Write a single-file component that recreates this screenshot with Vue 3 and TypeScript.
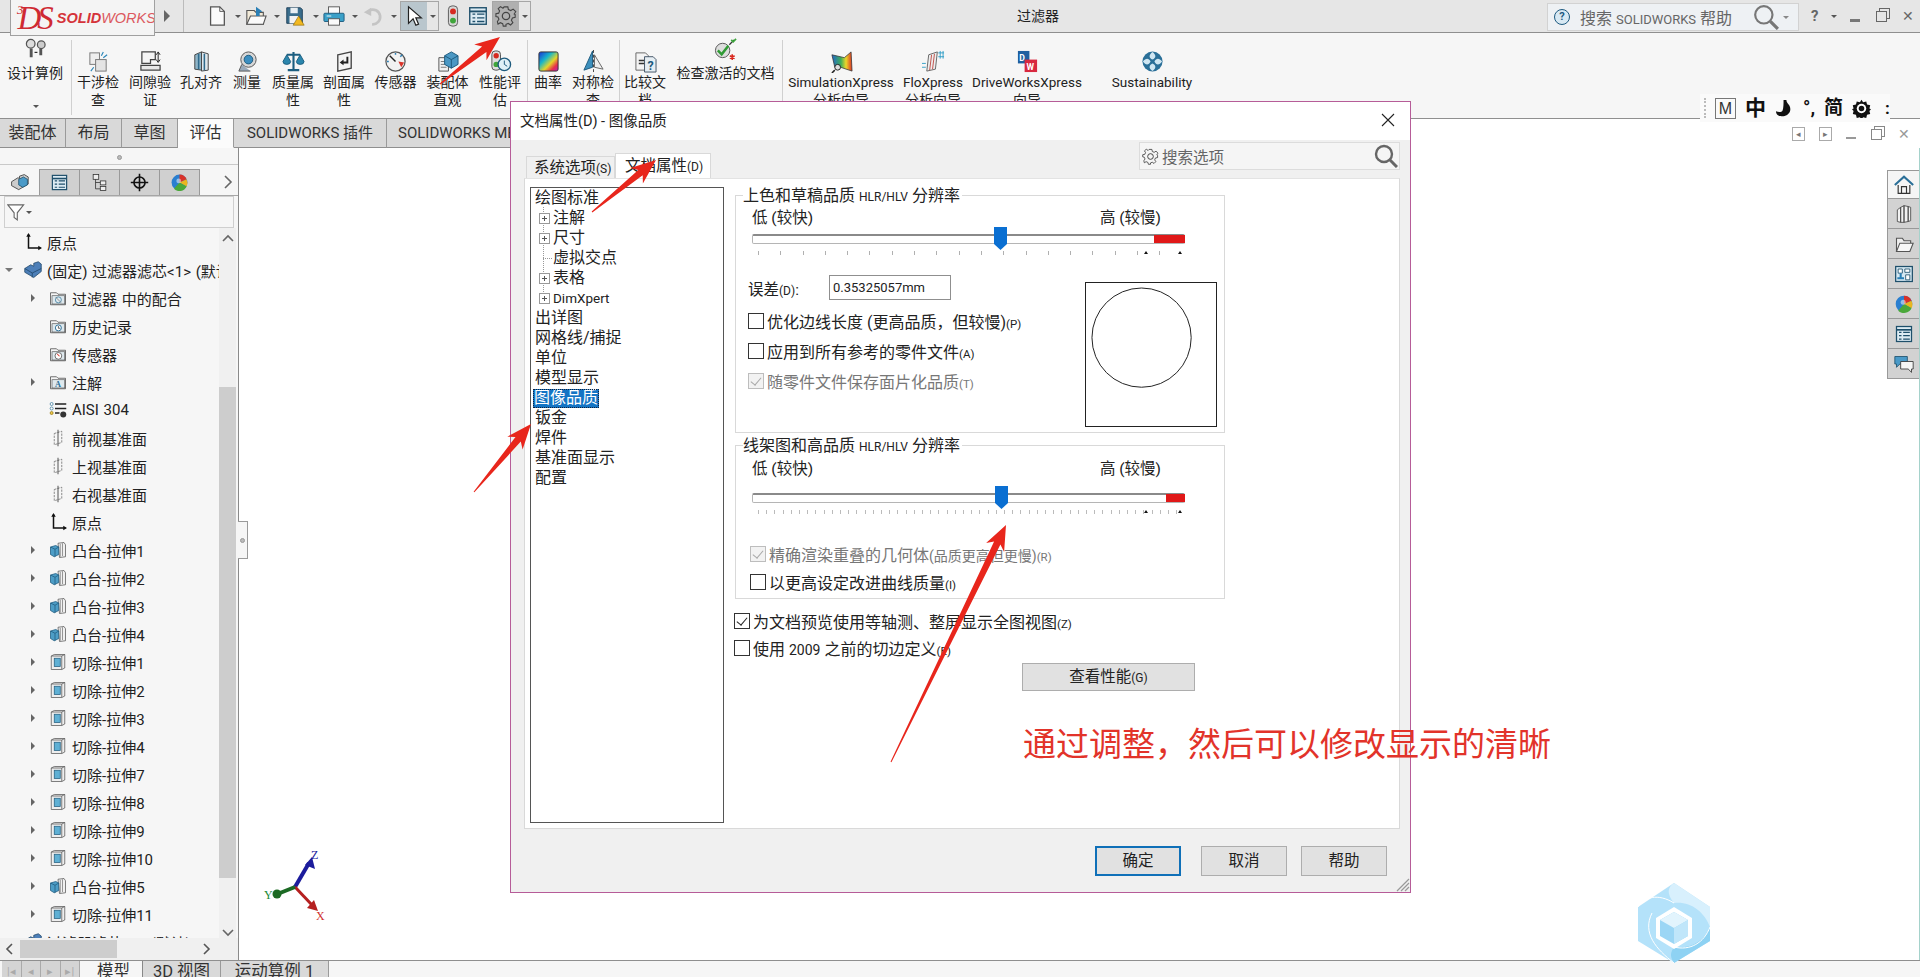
<template>
  <div class="app">
    <!-- 标题栏 -->
    <header class="titlebar">
      <div class="logo">
        <span class="logo-ds"><sup>3</sup>DS</span>
        <span class="logo-solid">SOLID</span><span class="logo-works">WORKS</span>
      </div>
      <svg class="logo-more" viewBox="0 0 8 14"><path d="M1 1l6 6-6 6z" fill="#666" /></svg>
      <div class="quick">
        <div v-for="t in quickTools" :key="t" class="tool">
          <svg viewBox="0 0 24 24" v-html="icons[t]"></svg>
          <i class="caret"></i>
        </div>
        <div class="tool-box tool-select">
          <svg viewBox="0 0 24 24" v-html="icons.cursor"></svg>
          <i class="caret"></i>
        </div>
        <svg class="tool-single" viewBox="0 0 24 24" v-html="icons.traffic"></svg>
        <svg class="tool-single" viewBox="0 0 24 24" v-html="icons.list"></svg>
        <div class="tool-box tool-gear">
          <svg viewBox="0 0 24 24" v-html="icons.gear"></svg>
          <i class="caret"></i>
        </div>
      </div>
      <div class="doc-title">过滤器</div>
      <div class="help-search">
        <span class="help-circle">?</span>
        <span class="help-text">搜索 <small>SOLIDWORKS</small> 帮助</span>
        <svg class="help-glass" viewBox="0 0 24 24"><circle cx="10" cy="10" r="8" fill="none" stroke="#777" stroke-width="2" /><path d="M16 16l7 7" stroke="#777" stroke-width="3" /></svg>
        <i class="caret"></i>
      </div>
      <div class="win-btns">
        <span class="win-q">?</span><i class="caret"></i>
        <span class="win-min"></span>
        <span class="win-restore"></span>
        <span class="win-x">✕</span>
      </div>
    </header>

    <!-- 功能区 -->
    <section class="ribbon">
      <div v-for="(g, gi) in ribbonGroups" :key="gi" class="rb-group">
        <div
          v-for="item in g"
          :key="item.lines.join('')"
          class="rb-item"
          :class="{ up: item.up }"
          :style="{ width: item.w + 'px' }"
        >
          <svg class="rb-icon" viewBox="0 0 24 24" v-html="icons[item.icon]"></svg>
          <span v-for="l in item.lines" :key="l" class="rb-line" :class="{ latin: /^[A-Za-z]/.test(l) }">{{ l }}</span>
          <i v-if="item.icon === 'study'" class="caret rb-caret"></i>
        </div>
      </div>
    </section>

    <nav class="cmd-tabs">
      <span v-for="t in cmdTabs" :key="t" class="cmd-tab" :class="{ active: t === '评估' }">{{ t }}</span>
    </nav>

    <main class="main">
      <aside class="side">
        <div class="sash"><i></i></div>
        <div class="side-tabs">
          <span v-for="(t, i) in sideTabs" :key="t" class="side-tab" :class="{ active: i === 0 }">
            <svg viewBox="0 0 24 24" v-html="icons[t]"></svg>
          </span>
          <svg class="side-more" viewBox="0 0 10 14"><path d="M2 1l6 6-6 6" fill="none" stroke="#666" stroke-width="1.6" /></svg>
        </div>
        <div class="filter">
          <svg viewBox="0 0 24 24"><path d="M1 3h20l-8 10v9l-4-3v-6z" fill="#fff" stroke="#666" stroke-width="1.4" /></svg>
          <i class="caret"></i>
        </div>
        <div class="tree-wrap">
          <div class="tree">
            <div v-for="(r, i) in treeRows" :key="i" class="t-row" :class="'lv' + r.lv">
              <i class="t-exp" :class="r.exp"></i>
              <svg class="t-icon" viewBox="0 0 24 24" v-html="icons[r.icon]"></svg>
              <span class="t-text">{{ r.text }}</span>
            </div>
          </div>
          <div class="vscroll">
            <svg viewBox="0 0 14 10"><path d="M2 8l5-5 5 5" fill="none" stroke="#666" stroke-width="1.6" /></svg>
            <div class="vtrack"><div class="vthumb"></div></div>
            <svg viewBox="0 0 14 10"><path d="M2 2l5 5 5-5" fill="none" stroke="#666" stroke-width="1.6" /></svg>
          </div>
        </div>
        <div class="hscroll">
          <svg viewBox="0 0 10 14"><path d="M8 2L3 7l5 5" fill="none" stroke="#555" stroke-width="1.6" /></svg>
          <div class="hthumb"></div>
          <svg class="hnext" viewBox="0 0 10 14"><path d="M2 2l5 5-5 5" fill="none" stroke="#555" stroke-width="1.6" /></svg>
        </div>
      </aside>

      <div class="view">
        <div class="side-handle"><i></i></div>
        <div class="view-btns">
          <span class="vb-box">◂</span><span class="vb-box">▸</span>
          <span class="win-min small"></span><span class="win-restore small"></span><span class="vb-x">✕</span>
        </div>
        <div class="task-pane">
          <span v-for="(t, i) in taskIcons" :key="t" class="task-btn" :class="{ active: i === 0 }">
            <svg viewBox="0 0 24 24" v-html="icons[t]"></svg>
          </span>
        </div>
        <svg class="triad" viewBox="0 0 70 70">
          <path d="M33 36L47 12" stroke="#1c1c9c" stroke-width="4" />
          <path d="M50 6l3 12-10-4z" fill="#1c1c9c" />
          <path d="M33 36L50 54" stroke="#b52020" stroke-width="3" />
          <path d="M56 60l-11-3 7-8z" fill="#b52020" />
          <path d="M33 36L18 42" stroke="#1b6a24" stroke-width="4" />
          <circle cx="15" cy="43" r="4.5" fill="#1b6a24" />
          <text x="49" y="8" class="tx" fill="#1c1c9c">Z</text>
          <text x="54" y="69" class="tx" fill="#d03030">X</text>
          <text x="2" y="48" class="tx" fill="#1b8a34">Y</text>
        </svg>
      </div>
    </main>

    <footer class="bottom">
      <div class="b-nav"><span v-for="n in ['|◂', '◂', '▸', '▸|']" :key="n">{{ n }}</span></div>
      <span class="b-tab active">模型</span>
      <span class="b-tab b-3d">3D 视图</span>
      <span class="b-tab b-motion">运动算例 1</span>
    </footer>

    <!-- 输入法状态条 -->
    <div class="ime">
      <i class="ime-dots"></i>
      <span class="ime-m">M</span>
      <b class="ime-zh">中</b>
      <svg viewBox="0 0 20 20"><path d="M9 1h3c0 4 5 5 4 11-1 5-7 7-10 6-3 0-5-2-5-5 3 1 6 1 7-1 1-3 1-7 1-11z" fill="#111" /></svg>
      <b class="ime-punct">°,</b>
      <b class="ime-zh small">简</b>
      <svg viewBox="0 0 24 24" v-html="icons.gearBlack"></svg>
      <b class="ime-menu">:</b>
    </div>

    <!-- 对话框 -->
    <div class="dialog">
      <div class="dlg-title">
        <span>文档属性(D) - 图像品质</span>
        <svg viewBox="0 0 14 14"><path d="M1 1l12 12M13 1L1 13" stroke="#222" stroke-width="1.1" /></svg>
      </div>
      <div class="dlg-tabs">
        <span class="dlg-tab">系统选项<small>(S)</small></span>
        <span class="dlg-tab active">文档属性<small>(D)</small></span>
        <div class="dlg-search">
          <svg class="ds-gear" viewBox="0 0 24 24" v-html="icons.gear"></svg>
          <span>搜索选项</span>
          <svg class="ds-glass" viewBox="0 0 24 24"><circle cx="10" cy="10" r="8" fill="none" stroke="#666" stroke-width="2.4" /><path d="M16 16l7 7" stroke="#666" stroke-width="3" /></svg>
        </div>
      </div>
      <div class="dlg-panel">
        <ul class="opt-tree">
          <li v-for="o in optionTree" :key="o.text" class="opt" :class="{ child: o.child, last: o.text === 'DimXpert' }">
            <i v-if="o.child" class="opt-box" :class="{ leaf: o.leaf }"></i>
            <span :class="{ selected: o.text === '图像品质', latin: o.text === 'DimXpert' }">{{ o.text }}</span>
          </li>
        </ul>

        <div class="opts">
          <div class="group g-shade">
            <div class="legend"><span>上色和草稿品质 <small>HLR/HLV</small> 分辨率</span></div>
            <div class="speed"><span>低 (较快)</span><span>高 (较慢)</span></div>
            <div class="slider">
              <div class="track"><div class="red" :style="{ width: '31px' }"></div></div>
              <svg class="thumb" viewBox="0 0 13 23"><path d="M0 0h13v17l-6.5 6L0 17z" fill="#0a6fd2" /></svg>
              <div class="ticks coarse"></div>
              <i class="mark m1"></i><i class="mark m2"></i>
            </div>
            <div class="shade-row">
              <div class="shade-left">
                <div class="dev-row">
                  <span class="dev-label">误差<small>(D)</small>:</span>
                  <span class="dev-input">0.35325057mm</span>
                </div>
                <label class="chk"><i class="box"></i><span>优化边线长度 (更高品质，但较慢)<small>(P)</small></span></label>
                <label class="chk"><i class="box"></i><span>应用到所有参考的零件文件<small>(A)</small></span></label>
                <label class="chk off"><i class="box on"></i><span>随零件文件保存面片化品质<small>(T)</small></span></label>
              </div>
              <div class="preview">
                <svg viewBox="0 0 131 144"><circle cx="56" cy="55" r="50" fill="none" stroke="#222" stroke-width="1" /></svg>
              </div>
            </div>
          </div>

          <div class="group g-wire">
            <div class="legend"><span>线架图和高品质 <small>HLR/HLV</small> 分辨率</span></div>
            <div class="speed"><span>低 (较快)</span><span>高 (较慢)</span></div>
            <div class="slider">
              <div class="track"><div class="red" :style="{ width: '19px' }"></div></div>
              <svg class="thumb t2" viewBox="0 0 13 23"><path d="M0 0h13v17l-6.5 6L0 17z" fill="#0a6fd2" /></svg>
              <div class="ticks fine"></div>
              <i class="mark m1"></i><i class="mark m2"></i>
            </div>
            <div class="wire-checks">
              <label class="chk off"><i class="box on"></i><span>精确渲染重叠的几何体<small class="mid">(品质更高但更慢)</small><small>(R)</small></span></label>
              <label class="chk"><i class="box"></i><span>以更高设定改进曲线质量<small>(I)</small></span></label>
            </div>
          </div>

          <div class="outer-checks">
            <label class="chk"><i class="box on"></i><span>为文档预览使用等轴测、整屏显示全图视图<small>(Z)</small></span></label>
            <label class="chk"><i class="box"></i><span>使用 <small class="mid">2009</small> 之前的切边定义<small>(E)</small></span></label>
          </div>
          <button class="btn perf">查看性能<small>(G)</small></button>
        </div>
      </div>
      <div class="dlg-foot">
        <button class="btn ok">确定</button>
        <button class="btn">取消</button>
        <button class="btn">帮助</button>
      </div>
      <svg class="grip" viewBox="0 0 14 14"><path d="M13 1L1 13M13 5L5 13M13 9l-4 4" stroke="#999" stroke-width="1.2" /></svg>
    </div>

    <!-- 标注 -->
    <div class="note">通过调整，然后可以修改显示的清晰</div>
    <svg class="marks" viewBox="0 0 1920 977">
      <polygon v-for="(a, i) in arrows" :key="i" :points="arrowPoints(a)" fill="#e8261c" />
    </svg>

    <!-- 水印 -->
    <svg class="wm" viewBox="0 0 72 80">
      <path d="M36 0l36 24v34L36 80 0 58V24z" fill="#b4e2fa" />
      <path d="M36 0l36 24v20C66 28 52 18 36 20 28 10 30 4 36 0z" fill="#d8f0fd" />
      <path d="M72 44v14L36 80c-4-6-4-10 0-16 18 2 30-6 36-20z" fill="#8ed2f3" />
      <path d="M0 24C6 14 20 10 36 20M72 44C66 60 52 68 36 64M36 80C18 66 4 50 14 30" fill="none" stroke="#fff" stroke-width="1" />
      <path d="M36 24l18 11v20L36 66 18 55V35z" fill="#fff" />
      <path d="M36 29l14 8v16l-14 8-14-8V37z" fill="#9bd6f5" />
      <path d="M36 29l14 8-14 8-14-8z" fill="#e2f4fd" />
      <path d="M36 45v16l14-8V37z" fill="#c0e6fa" />
    </svg>
  </div>
</template>

<script setup lang="ts">
interface RibbonItem { icon: string; lines: string[]; w: number; up?: boolean }
interface TreeRow { lv: number; exp: string; icon: string; text: string }
interface OptionNode { text: string; child?: boolean; leaf?: boolean }
type Arrow = [number, number, number, number]

const ball = '<circle cx="12" cy="12" r="10" fill="#2a7fd0"/><path d="M12 12V2a10 10 0 0 1 9 6z" fill="#d8322a"/><path d="M12 12l9-4a10 10 0 0 1 0 9z" fill="#e9b61f"/><path d="M12 12l9 5a10 10 0 0 1-16 3z" fill="#4aa83a"/><circle cx="11" cy="10" r="3" fill="#fff" opacity=".5"/>'
const listIcon = '<rect x="3" y="3" width="18" height="18" fill="#dcebf3" stroke="#1e4f6b" stroke-width="1.5"/><path d="M3 7h18" stroke="#1e4f6b" stroke-width="2"/><path d="M6 10h3M6 14h3M6 18h3M11 10h8M11 14h8M11 18h8" stroke="#1e4f6b" stroke-width="1.5"/>'
const folderBase = '<path d="M2 5h8l2 2h10v14H2z" fill="#f5f5f5" stroke="#444"/><rect x="4" y="9" width="17" height="11" fill="#dfe9ee" stroke="#444" stroke-width=".8"/>'
const planeIcon = '<path d="M7 6l10-3v15L7 21z" fill="none" stroke="#666" stroke-dasharray="3 1.5"/><path d="M12 1v22" stroke="#222"/>'
const originIcon = '<path d="M6 2v18h16" fill="none" stroke="#111" stroke-width="2"/><path d="M6 0l-3 5h6zM24 20l-5-3v6z" fill="#111"/>'
const bossIcon = '<path d="M12 3l8-1 2 3v16l-8 1z" fill="#f0f0f0" stroke="#555"/><path d="M15 4v17M18 3v17" stroke="#777"/><path d="M2 8l7-2 4 2v10l-6 3-5-3z" fill="#4d9dc6" stroke="#1d5a7d"/><path d="M2 8l6 3 5-3M8 11v10" fill="none" stroke="#1d5a7d"/>'
const cutIcon = '<path d="M3 4l4-2h14v18l-4 2H3z" fill="#eee" stroke="#555"/><path d="M3 4h14v18M17 4l4-2" fill="none" stroke="#555"/><rect x="7" y="7" width="8" height="11" fill="#5fb0d4" stroke="#245f80"/>'

const icons: Record<string, string> = {
  newDoc: '<path d="M5 2h10l5 5v15H5z" fill="#fafafa" stroke="#555" stroke-width="1.4"/><path d="M15 2v5h5" fill="none" stroke="#555"/>',
  open: '<path d="M2 6h8l2 2h8v13H2z" fill="#f2ead8" stroke="#555" stroke-width="1.2"/><path d="M2 21l4-9h17l-3 9z" fill="#fafafa" stroke="#555" stroke-width="1.2"/><path d="M12 2l7 5-3 1v4h-4V8z" fill="#2a7fb5"/>',
  save: '<path d="M3 3h15l2 2v15H3z" fill="#3a6d8c" stroke="#1e4058"/><rect x="7" y="3" width="8" height="6" fill="#e8eef2"/><rect x="6" y="12" width="10" height="8" fill="#f2f2f2"/><path d="M16 12l6 10H10z" fill="#f2b81f" stroke="#8a6a10" stroke-width=".7"/>',
  print: '<rect x="6" y="2" width="12" height="8" fill="#fafafa" stroke="#555"/><rect x="1" y="9" width="22" height="9" rx="1" fill="#3aa0c8" stroke="#1d5a7d"/><rect x="6" y="15" width="12" height="7" fill="#fafafa" stroke="#555"/><path d="M4 12h5" stroke="#fff"/>',
  undo: '<path d="M8 6a8 8 0 1 1 3 15" fill="none" stroke="#c4c4c4" stroke-width="3"/><path d="M2 8l8-5v9z" fill="#c4c4c4"/>',
  cursor: '<path d="M6 2v18l5-5 3 7 3-1-3-7h6z" fill="#fff" stroke="#222" stroke-width="1.3"/>',
  traffic: '<rect x="7" y="1" width="10" height="22" rx="4" fill="#d7d7d7" stroke="#555"/><circle cx="12" cy="7" r="3.2" fill="#d62a20"/><circle cx="12" cy="17" r="3.2" fill="#3fa53a"/>',
  list: listIcon,
  gear: '<circle cx="12" cy="12" r="4" fill="none" stroke="#444" stroke-width="1.4"/><path d="M10 2h4l.6 3 2.6 1.1 2.6-1.6 2.8 2.8-1.7 2.5L22 10.500v3l-3 .6-1.1 2.6 1.6 2.6-2.500 2.500-2.500-1.700-2.500 1V23h-3l-.6-2.600-2.600-1.100-2.500 1.600L2.600 18l1.700-2.500L3.200 13 1 12.500v-3l3-.6 1-2.500L3.500 4 6 1.800 8.700 3.500 10 2z" fill="none" stroke="#444" stroke-width="1.2"/>',
  gearBlack: '<path d="M12 1l2 3 4-1 1 4 4 1-1 4 2 1-2 2 1 4-4 1-1 4-4-1-2 3-2-3-4 1-1-4-4-1 1-4-2-2 2-1-1-4 4-1 1-4 4 1z" fill="#111"/><circle cx="12" cy="12" r="6" fill="#fff"/><circle cx="12" cy="12" r="3.500" fill="#111"/>',
  study: '<circle cx="7" cy="6" r="4.500" fill="#ddd" stroke="#555" stroke-width="1.3"/><circle cx="18" cy="7" r="4" fill="#ccc" stroke="#555" stroke-width="1.3"/><path d="M6 11h3v9H6zM16 11h3v7h-3z" fill="#555"/><path d="M11 15h3" stroke="#222" stroke-width="1.2"/>',
  interfere: '<rect x="3" y="3" width="10" height="12" fill="#eee" stroke="#777"/><rect x="9" y="10" width="11" height="12" fill="#e4e4e4" stroke="#777"/><path d="M17 2l-2 4M21 5l-4 3M4 22l3-4" stroke="#2a86b8" stroke-width="1.2"/>',
  clearance: '<path d="M3 2h14v8h-5v4H3z" fill="#f5f5f5" stroke="#444" stroke-width="1.3"/><path d="M2 21h20v-5H2z" fill="#e8e8e8" stroke="#444" stroke-width="1.300"/><path d="M20 3v9M18 5l2-3 2 3M18 10l2 3 2-3" fill="none" stroke="#222"/>',
  hole: '<path d="M5 5l7-3v19l-7-1z" fill="#8fb5c8" stroke="#444"/><path d="M12 2l7 2v17l-7 1z" fill="#dfe7ec" stroke="#444"/><path d="M9 4v16M15 4v17" stroke="#2f6a8c" stroke-width="1.600"/>',
  measure: '<circle cx="13" cy="10" r="8" fill="#d7d7d7" stroke="#555"/><circle cx="13" cy="10" r="4.500" fill="#3b8ec0" stroke="#1d5a7d"/><path d="M6 15l-3 7h12" fill="#9ab" stroke="#555"/>',
  mass: '<path d="M12 2v18M5 5h14M6 21h12" stroke="#1c5e80" stroke-width="2.200"/><path d="M1 12l4-7 4 7a4 3 0 0 1-8 0zM15 12l4-7 4 7a4 3 0 0 1-8 0z" fill="#2b86ad" stroke="#1c5e80"/>',
  section: '<path d="M5 5l14-3v17L5 22z" fill="#f4f4f4" stroke="#444" stroke-width="1.400"/><path d="M15 7v6H9" fill="none" stroke="#222" stroke-width="2"/><path d="M11 10l-4 3 4 3z" fill="#222"/>',
  sensor: '<circle cx="12" cy="12" r="10" fill="#f2f2f2" stroke="#555" stroke-width="1.300"/><path d="M12 12L6 6" stroke="#222" stroke-width="1.500"/><path d="M12 3v2M3 12h2M19 5l-2 2" stroke="#2a7fb5" stroke-width="1.500"/><path d="M15 12l6 1-3 5z" fill="#d9342a"/>',
  asmviz: '<path d="M3 8h10v14H3z" fill="#f2f2f2" stroke="#555"/><path d="M5 12h6M5 15h6M5 18h6" stroke="#777"/><path d="M9 6l7-4 7 4v9l-7 4-7-4z" fill="#4b98c4" stroke="#1d5a7d"/><path d="M16 10v9M9 6l7 4 7-4" fill="none" stroke="#1d5a7d"/>',
  perf: '<rect x="3" y="1" width="9" height="20" rx="3.500" fill="#ddd" stroke="#555"/><circle cx="7.500" cy="6" r="2.800" fill="#d62a20"/><circle cx="7.500" cy="15" r="2.800" fill="#3fa53a"/><circle cx="16" cy="15" r="6.500" fill="#dff0f7" stroke="#1d5a7d" stroke-width="1.400"/><path d="M16 11v4l3 2" fill="none" stroke="#1d5a7d"/>',
  curve: '<defs><linearGradient id="cv" x1="0" y1="0" x2="1" y2="1"><stop offset="0" stop-color="#1832d8"/><stop offset=".35" stop-color="#19b6c9"/><stop offset=".6" stop-color="#e3d62a"/><stop offset=".8" stop-color="#e8304a"/><stop offset="1" stop-color="#b51fc0"/></linearGradient></defs><rect x="2" y="2" width="20" height="20" rx="2" fill="url(#cv)" stroke="#333"/>',
  symmetry: '<path d="M11 1L2 21l9-3z" fill="#3d90bd" stroke="#1d5a7d"/><path d="M13 5l9 15-9-2z" fill="#eee" stroke="#666"/><path d="M12 0v24" stroke="#444" stroke-dasharray="3 2"/>',
  compare: '<path d="M2 3h10l3 3v15H2z" fill="#f4f4f4" stroke="#666"/><path d="M5 11h7M5 14h7" stroke="#333" stroke-width="1.500"/><path d="M11 7h9l3 3v13H11z" fill="#e6eef3" stroke="#456"/><text x="14" y="21" font-size="13" font-weight="700" fill="#1d5a7d">?</text>',
  check: '<circle cx="9" cy="13" r="7.500" fill="#ddd" stroke="#555"/><path d="M4 13l4 4 7-9" fill="none" stroke="#2f9a34" stroke-width="2.600"/><path d="M16 7l5-5" stroke="#333" stroke-width="1.300"/><path d="M18 2l2 2 3-3" stroke="#3aa53a" stroke-width="1.800" fill="none"/><path d="M19 17v6M16.500 18.500l5 3M21.500 18.500l-5 3" stroke="#d9261c" stroke-width="1.600"/>',
  simx: '<defs><linearGradient id="sx" x1="0" y1="0" x2="1" y2="0"><stop offset="0" stop-color="#2266c8"/><stop offset=".45" stop-color="#3fae5a"/><stop offset=".7" stop-color="#ecd62a"/><stop offset="1" stop-color="#dc3025"/></linearGradient></defs><path d="M2 5l13 3 7-6 1 20-12-4H5z" fill="url(#sx)" stroke="#333" stroke-width=".8"/><circle cx="8" cy="18" r="3" fill="#ddd" stroke="#222"/><path d="M5 21l-3 3" stroke="#222" stroke-width="1.600"/>',
  flo: '<path d="M7 5l9-3-2 18-9 2z" fill="#eee" stroke="#666"/><path d="M10 5l-2 16M13 4l-2 16" stroke="#c0504a"/><path d="M17 3h6M17 7h6M19 1v8M22 1v8M0 14h4M0 18h4" stroke="#35a0c8"/>',
  dw: '<rect x="2" y="1" width="12" height="13" fill="#1f5fa0"/><rect x="9" y="10" width="13" height="13" fill="#d8283f"/><text x="3.500" y="11" font-size="9" font-weight="700" fill="#fff">D</text><text x="11" y="21" font-size="9" font-weight="700" fill="#fff">W</text>',
  sus: '<circle cx="12" cy="12" r="10.500" fill="#2a6f98"/><path d="M12 2c4 3 4 6 0 8-4-2-4-5 0-8zM2 12c3-4 6-4 8 0-2 4-5 4-8 0zM22 12c-3-4-6-4-8 0 2 4 5 4 8 0zM12 22c4-3 4-6 0-8-4 2-4 5 0 8z" fill="#cfe6f2"/>',
  part: '<path d="M1 10l8-5 4 2v-4l6-2 4 3v10l-10 8L1 15z" fill="#4d7fb8" stroke="#1e4466"/><path d="M1 10l10 6 12-6M11 16v6" fill="none" stroke="#1e4466"/>',
  tabPart: '<path d="M2 11l8-5 2 1V4l6-2 5 3v9l-12 7-9-5z" fill="#ccc" stroke="#333"/><path d="M11 8l6-3 5 3v7l-6 3-5-3z" fill="#4a9ac8" stroke="#1d4f6b"/>',
  tabList: listIcon,
  tabConfig: '<rect x="4" y="2" width="7" height="6" fill="#eee" stroke="#333"/><rect x="13" y="10" width="7" height="5" fill="#eee" stroke="#333"/><rect x="13" y="17" width="7" height="5" fill="#eee" stroke="#333"/><path d="M7 8v12h6M7 12h6" fill="none" stroke="#333"/>',
  tabTarget: '<circle cx="12" cy="12" r="7" fill="none" stroke="#111" stroke-width="2"/><path d="M12 1v22M1 12h22" stroke="#111" stroke-width="2"/>',
  ball,
  mateFolder: folderBase + '<circle cx="12.500" cy="14.500" r="4" fill="none" stroke="#3a7a9c"/><path d="M9 11l7 7" stroke="#777"/>',
  history: folderBase + '<circle cx="12.500" cy="14.500" r="4" fill="#fff" stroke="#2a6f98" stroke-width="1.300"/><path d="M12.500 12v3h2.500" fill="none" stroke="#333"/>',
  sensorFolder: folderBase + '<circle cx="12.500" cy="14.500" r="4.500" fill="#fff" stroke="#444"/><path d="M11 12l3 3" stroke="#d9342a" stroke-width="1.400"/>',
  annot: folderBase + '<text x="8" y="19" font-size="11" font-weight="700" font-family="Liberation Serif" fill="#2a6f98">A</text>',
  material: '<circle cx="3.500" cy="4" r="2" fill="#fff" stroke="#3a7a9c"/><circle cx="3.500" cy="10" r="2" fill="#fff" stroke="#3a7a9c"/><circle cx="3.500" cy="16" r="2" fill="#ecc94b" stroke="#9a7a10"/><path d="M8 4h15M8 10h15M8 16h6" stroke="#222" stroke-width="1.800"/><circle cx="19" cy="18" r="4" fill="#333"/>',
  plane: planeIcon,
  origin: originIcon,
  boss: bossIcon,
  cut: cutIcon,
  home: '<path d="M1 12L12 2l11 10" fill="none" stroke="#2a6f98" stroke-width="2.500"/><path d="M5 12v10h14V12" fill="#f5f5f5" stroke="#333" stroke-width="1.400"/><path d="M9 22v-8h6v8" fill="none" stroke="#333" stroke-width="1.400"/>',
  books: '<path d="M4 7l4-3v18l-4-1zM8 4l4-2v20l-4 0zM12 2l5 1v18l-5 1zM17 3l3 1v16l-3 1z" fill="#f2f2f2" stroke="#444"/>',
  folderOpen: '<path d="M3 21V5h7l2 3h8v3" fill="#eee" stroke="#555" stroke-width="1.300"/><path d="M3 21l4-10h16l-4 10z" fill="#f7f7f7" stroke="#555" stroke-width="1.300"/>',
  lib: '<rect x="2" y="3" width="20" height="18" fill="#d5e8f2" stroke="#1e4f6b" stroke-width="1.500"/><path d="M5 6h5v5H5zM13 6h6v4h-6zM14 13h5v6h-5z" fill="#fff" stroke="#1e4f6b"/><path d="M4 17h8M8 11v6" stroke="#2a7fb5" stroke-width="2.500"/>',
  chat: '<path d="M1 3h15v9H7l-4 4v-4H1z" fill="#4a9ac8" stroke="#1e4f6b"/><path d="M8 9h15v9h-2v4l-4-4H8z" fill="#f5f5f5" stroke="#333"/>',
}

const quickTools = ['newDoc', 'open', 'save', 'print', 'undo']

const ribbonGroups: RibbonItem[][] = [
  [{ icon: 'study', lines: ['设计算例'], w: 70, up: true }],
  [
    { icon: 'interfere', lines: ['干涉检', '查'], w: 52 },
    { icon: 'clearance', lines: ['间隙验', '证'], w: 52 },
    { icon: 'hole', lines: ['孔对齐'], w: 50 },
    { icon: 'measure', lines: ['测量'], w: 42 },
    { icon: 'mass', lines: ['质量属', '性'], w: 50 },
    { icon: 'section', lines: ['剖面属', '性'], w: 52 },
    { icon: 'sensor', lines: ['传感器'], w: 51 },
    { icon: 'asmviz', lines: ['装配体', '直观'], w: 53 },
    { icon: 'perf', lines: ['性能评', '估'], w: 52 },
  ],
  [
    { icon: 'curve', lines: ['曲率'], w: 40 },
    { icon: 'symmetry', lines: ['对称检', '查'], w: 50 },
  ],
  [
    { icon: 'compare', lines: ['比较文', '档'], w: 50 },
    { icon: 'check', lines: ['检查激活的文档'], w: 111, up: true },
  ],
  [
    { icon: 'simx', lines: ['SimulationXpress', '分析向导'], w: 116 },
    { icon: 'flo', lines: ['FloXpress', '分析向导'], w: 68 },
    { icon: 'dw', lines: ['DriveWorksXpress', '向导'], w: 120 },
    { icon: 'sus', lines: ['Sustainability'], w: 130 },
  ],
]

const cmdTabs = ['装配体', '布局', '草图', '评估', 'SOLIDWORKS 插件', 'SOLIDWORKS MBD']
const sideTabs = ['tabPart', 'tabList', 'tabConfig', 'tabTarget', 'ball']
const taskIcons = ['home', 'books', 'folderOpen', 'lib', 'ball', 'list', 'chat']

const treeRows: TreeRow[] = [
  { lv: 0, exp: '', icon: 'origin', text: '原点' },
  { lv: 0, exp: 'down', icon: 'part', text: '(固定) 过滤器滤芯<1> (默认)' },
  { lv: 1, exp: 'right', icon: 'mateFolder', text: '过滤器 中的配合' },
  { lv: 1, exp: '', icon: 'history', text: '历史记录' },
  { lv: 1, exp: '', icon: 'sensorFolder', text: '传感器' },
  { lv: 1, exp: 'right', icon: 'annot', text: '注解' },
  { lv: 1, exp: '', icon: 'material', text: 'AISI 304' },
  { lv: 1, exp: '', icon: 'plane', text: '前视基准面' },
  { lv: 1, exp: '', icon: 'plane', text: '上视基准面' },
  { lv: 1, exp: '', icon: 'plane', text: '右视基准面' },
  { lv: 1, exp: '', icon: 'origin', text: '原点' },
  ...['1', '2', '3', '4'].map((n) => ({ lv: 1, exp: 'right', icon: 'boss', text: '凸台-拉伸' + n })),
  ...['1', '2', '3', '4', '7', '8', '9', '10'].map((n) => ({ lv: 1, exp: 'right', icon: 'cut', text: '切除-拉伸' + n })),
  { lv: 1, exp: 'right', icon: 'boss', text: '凸台-拉伸5' },
  { lv: 1, exp: 'right', icon: 'cut', text: '切除-拉伸11' },
  { lv: 0, exp: 'right', icon: 'part', text: '过滤器滤芯<1> (默认)' },
]

const optionTree: OptionNode[] = [
  { text: '绘图标准' },
  { text: '注解', child: true },
  { text: '尺寸', child: true },
  { text: '虚拟交点', child: true, leaf: true },
  { text: '表格', child: true },
  { text: 'DimXpert', child: true },
  { text: '出详图' },
  { text: '网格线/捕捉' },
  { text: '单位' },
  { text: '模型显示' },
  { text: '图像品质' },
  { text: '钣金' },
  { text: '焊件' },
  { text: '基准面显示' },
  { text: '配置' },
]

const arrows: Arrow[] = [
  [440, 84, 500, 37],
  [592, 212, 656, 160],
  [474, 492, 531, 424],
  [891, 762, 1006, 525],
]

// 尾部细、头部带倒钩的手绘箭头
const arrowPoints = ([x1, y1, x2, y2]: Arrow): string => {
  const len = Math.hypot(x2 - x1, y2 - y1)
  const dx = (x2 - x1) / len
  const dy = (y2 - y1) / len
  const nx = -dy
  const ny = dx
  const nk = (d: number, s: number) => `${(x2 - dx * d + nx * s).toFixed(1)},${(y2 - dy * d + ny * s).toFixed(1)}`
  return [
    `${x1 + nx * 0.5},${y1 + ny * 0.5}`,
    nk(20, 3.5),
    nk(25, 10),
    nk(0, 0),
    nk(25, -10),
    nk(20, -3.5),
    `${x1 - nx * 0.5},${y1 - ny * 0.5}`,
  ].join(' ')
}
</script>

<style scoped>
.app {
  position: relative;
  width: 1920px;
  height: 977px;
  overflow: hidden;
  display: flex;
  flex-direction: column;
  background: #fff;
  color: #222;
  font-family: Roboto, "Noto Sans CJK SC", sans-serif;
  font-size: 14px;
}

.caret {
  display: inline-block;
  width: 0;
  height: 0;
  border-left: 3px solid transparent;
  border-right: 3px solid transparent;
  border-top: 3px solid #555;
}

/* 标题栏 */
.titlebar {
  position: relative;
  z-index: 2;
  height: 33px;
  flex: none;
  display: flex;
  box-sizing: border-box;
  background: #e6e6e6;
  border-bottom: 1px solid #8f8f8f;
}

.logo {
  margin-left: 10px;
  width: 145px;
  height: 36px;
  flex: none;
  box-sizing: border-box;
  display: flex;
  align-items: center;
  padding-left: 6px;
  background: #f4f4f4;
  border: 1px solid #a0a0a0;
  border-top: none;
  font-style: italic;
  color: #d5333a;
  white-space: nowrap;
  overflow: hidden;
}
.logo-ds {
  font: italic 400 33px "Liberation Serif", serif;
  letter-spacing: -4px;
  margin-right: 7px;
  color: #cf2a33;
  line-height: 36px;
}
.logo-ds sup { font-size: 13px; vertical-align: 15px; letter-spacing: 0; margin-right: -6px; line-height: 0; }
.logo-solid { font: italic 700 14.5px "Liberation Sans", sans-serif; }
.logo-works { font: italic 400 14.5px "Liberation Sans", sans-serif; color: #dc5a5f; }

.logo-more { width: 8px; height: 14px; margin: 9px 8px 0; flex: none; }

.quick {
  margin-left: 4px;
  padding-left: 21px;
  border-left: 1px solid #bbb;
  display: flex;
  align-items: center;
  width: 360px;
  flex: none;
  box-sizing: border-box;
}
.tool { width: 39px; display: flex; align-items: center; gap: 6px; flex: none; }
.tool svg { width: 24px; height: 22px; }
.tool-box {
  height: 30px;
  display: flex;
  align-items: center;
  box-sizing: border-box;
  border: 1px solid #a6a6a6;
  flex: none;
  width: 39px;
}
.tool-box svg { background: #b9c6cd; padding: 2px; box-sizing: border-box; height: 28px; width: 26px; }
.tool-box .caret { margin-left: 3px; }
.tool-single { width: 22px; height: 24px; margin-left: 3px; flex: none; }
.tool-gear { margin-left: 3px; }
.tool-gear svg { background: #b0b0b0; }

.doc-title {
  position: absolute;
  left: 1017px;
  top: 6px;
  font-size: 14px;
  line-height: 20px;
}

.help-search {
  position: absolute;
  left: 1547px;
  top: 3px;
  width: 252px;
  height: 28px;
  box-sizing: border-box;
  display: flex;
  align-items: center;
  padding-left: 6px;
  background: #eef1f4;
  border: 1px solid #d2d2d2;
}
.help-circle {
  width: 14px;
  height: 14px;
  line-height: 14px;
  text-align: center;
  font-size: 11px;
  font-weight: 700;
  color: #1e5a80;
  border: 1px solid #1e5a80;
  border-radius: 50%;
  background: #d8e9f3;
  flex: none;
}
.help-text { margin-left: 10px; font-size: 16px; color: #666; width: 164px; white-space: nowrap; }
.help-text small { font-size: 13px; }
.help-glass { width: 26px; height: 26px; flex: none; margin-left: 9px; }
.help-search .caret { margin-left: 4px; border-top-color: #888; }

.win-btns {
  position: absolute;
  left: 1808px;
  top: 0;
  height: 32px;
  display: flex;
  align-items: center;
}
.win-q { font-size: 15px; font-weight: 700; color: #666; margin-right: 13px; margin-left: 3px; }
.win-min {
  width: 10px;
  height: 3px;
  background: #777;
  margin: 8px 16px 0 13px;
}
.win-restore {
  position: relative;
  width: 9px;
  height: 9px;
  border: 1px solid #666;
  margin-right: 15px;
  box-shadow: 3px -3px 0 -1px #e6e6e6, 3px -3px 0 0 #666;
}
.win-x { font-size: 14px; color: #666; }

/* 功能区 */
.ribbon {
  height: 86px;
  flex: none;
  display: flex;
  overflow: hidden;
  background: #f6f6f6;
  border-bottom: 1px solid #8f8f8f;
  box-sizing: border-box;
}
.rb-group { display: flex; position: relative; padding-right: 2px; }
.rb-group::after {
  content: "";
  position: absolute;
  right: 0;
  top: 7px;
  height: 75px;
  border-right: 1px solid #d0d0d0;
}
.rb-group:last-child::after { display: none; }
.rb-item {
  position: relative;
  flex: none;
  display: flex;
  flex-direction: column;
  align-items: center;
  padding-top: 17px;
}
.rb-item.up { padding-top: 5px; }
.rb-item.up .rb-line { margin-top: 3px; }
.rb-icon { width: 23px; height: 23px; flex: none; }
.rb-line { line-height: 18px; white-space: nowrap; font-size: 14px; color: #222; }
.rb-line.latin { font-size: 13.500px; }
.rb-caret { position: absolute; top: 72px; left: 33px; }

/* 命令页签 */
.cmd-tabs {
  height: 29px;
  flex: none;
  display: flex;
  background: #fff;
  box-sizing: border-box;
}
.cmd-tab {
  flex: none;
  height: 29px;
  box-sizing: border-box;
  line-height: 28px;
  text-align: center;
  font-size: 16px;
  background: #d9d9d9;
  color: #333;
  border-right: 1px solid #9a9a9a;
  border-bottom: 1px solid #8f8f8f;
  white-space: nowrap;
  width: 56px;
}
.cmd-tab:first-child { width: 66px; }
.cmd-tab:nth-child(5) { width: 153px; font-size: 15px; }
.cmd-tab:last-child { width: 200px; font-size: 15px; text-align: left; padding-left: 11px; }
.cmd-tab.active { background: #fbfbfb; border-bottom-color: transparent; }

/* 主区 */
.main { flex: 1; min-height: 0; display: flex; }

.side {
  width: 239px;
  flex: none;
  box-sizing: border-box;
  display: flex;
  flex-direction: column;
  background: #f6f6f6;
  border-right: 1px solid #8a8a8a;
}
.sash {
  height: 17px;
  flex: none;
  border-bottom: 1px solid #c9c9c9;
  display: flex;
  align-items: center;
  justify-content: center;
  padding-top: 2px;
  box-sizing: border-box;
}
.sash i { width: 5px; height: 5px; border-radius: 50%; background: #bbb; border: 1px solid #999; box-sizing: border-box; }

.side-tabs {
  height: 26px;
  margin-top: 4px;
  flex: none;
  display: flex;
  align-items: center;
  border-bottom: 1px solid #a6a6a6;
  box-sizing: content-box;
}
.side-tab {
  width: 40px;
  height: 26px;
  box-sizing: border-box;
  display: flex;
  align-items: center;
  justify-content: center;
  background: #d0d0d0;
  border: 1px solid #9a9a9a;
  border-left: none;
  border-bottom: none;
}
.side-tab.active { background: #f6f6f6; border-top: none; }
.side-tab svg { width: 19px; height: 19px; }
.side-more { width: 10px; height: 14px; margin-left: 23px; }

.filter {
  margin: 0 4px;
  height: 32px;
  flex: none;
  box-sizing: border-box;
  border: 1px solid #cfcfcf;
  display: flex;
  align-items: center;
  padding-left: 2px;
}
.filter svg { width: 19px; height: 22px; }

.tree-wrap { flex: 1; min-height: 0; display: flex; position: relative; }
.tree { width: 219px; flex: none; overflow: hidden; }
.t-row { height: 28px; display: flex; align-items: center; white-space: nowrap; font-size: 15px; word-spacing: 1px; }
.t-exp { width: 7px; height: 10px; flex: none; margin-right: 11px; }
.t-exp.right {
  width: 0;
  height: 0;
  border-top: 4px solid transparent;
  border-bottom: 4px solid transparent;
  border-left: 4px solid #666;
  margin-right: 14px;
}
.t-exp.down {
  margin-left: -1px;
  width: 0;
  height: 0;
  border-left: 4px solid transparent;
  border-right: 4px solid transparent;
  border-top: 4px solid #777;
  margin-right: 11px;
}
.lv0 { padding-left: 6px; }
.lv1 { padding-left: 31px; }
.t-icon { width: 18px; height: 18px; flex: none; margin-right: 5px; }
.t-text { color: #222; }

.vscroll { width: 17px; flex: none; display: flex; flex-direction: column; background: #f0f0f0; }
.vscroll svg { width: 14px; height: 10px; margin: 5px auto 5px; flex: none; }
.vtrack { flex: 1; padding-top: 139px; padding-bottom: 45px; }
.vthumb { height: 491px; background: #cdcdcd; }

.hscroll {
  height: 22px;
  flex: none;
  display: flex;
  align-items: center;
  background: #f0f0f0;
  padding-left: 4px;
  position: relative;
}
.hscroll svg { width: 10px; height: 14px; flex: none; }
.hthumb { width: 97px; height: 18px; margin-left: 6px; background: #cdcdcd; flex: none; }
.hnext { margin-left: 85px; }

.view { flex: 1; position: relative; background: #fff; border-right: 1px solid #a5d2cb; }
.side-handle {
  position: absolute;
  left: -1px;
  top: 373px;
  width: 9px;
  height: 36px;
  background: #f6f6f6;
  border: 1px solid #9a9a9a;
  border-left: none;
  display: flex;
  align-items: center;
  justify-content: center;
}
.side-handle i { width: 5px; height: 5px; border-radius: 50%; background: #bbb; border: 1px solid #999; box-sizing: border-box; }

.view-btns {
  position: absolute;
  right: 9px;
  top: -27px;
  height: 26px;
  display: flex;
  align-items: center;
  color: #888;
}
.vb-box {
  width: 11px;
  height: 12px;
  border: 1px solid #aaa;
  font-size: 9px;
  line-height: 12px;
  text-align: center;
  margin-right: 14px;
  color: #777;
}
.win-min.small { margin: 8px 15px 0 0; background: #999; height: 2px; }
.win-restore.small { border-color: #888; box-shadow: 3px -3px 0 -1px #fff, 3px -3px 0 0 #888; margin-right: 16px; }
.vb-x { font-size: 14px; color: #999; }

.task-pane {
  position: absolute;
  right: 0;
  top: 22px;
  width: 32px;
  display: flex;
  flex-direction: column;
}
.task-btn {
  height: 30px;
  box-sizing: border-box;
  display: flex;
  align-items: center;
  justify-content: center;
  background: #d2d2d2;
  border: 1px solid #999;
  border-right: none;
  border-top: none;
}
.task-btn:first-child { border-top: 1px solid #999; }
.task-btn.active { background: #f5f5f5; height: 29px; }
.task-btn svg { width: 20px; height: 20px; }

.triad { position: absolute; left: 23px; top: 703px; width: 70px; height: 70px; overflow: visible; }
.tx { font: 12px "Liberation Serif", serif; }

.bottom {
  height: 16px;
  flex: none;
  display: flex;
  overflow: hidden;
  background: #f6f6f6;
  border-top: 1px solid #8f8f8f;
  font-size: 16.500px;
  line-height: 22px;
  box-sizing: content-box;
}
.b-nav { width: 80px; flex: none; display: flex; padding-left: 2px; box-sizing: border-box; }
.b-nav span {
  width: 19px;
  text-align: center;
  font-size: 11px;
  color: #aaa;
  background: #d4d4d4;
  border-right: 1px solid #aaa;
}
.b-tab {
  flex: none;
  box-sizing: border-box;
  text-align: center;
  background: #d9d9d9;
  border-right: 1px solid #9a9a9a;
  white-space: nowrap;
  color: #333;
}
.b-tab.active { background: #f6f6f6; width: 63px; border-right: 1px solid #888; padding-left: 3px; text-align: left; padding-left: 17px; }
.b-3d { width: 78px; }
.b-motion { width: 108px; }

/* 输入法 */
.ime {
  position: absolute;
  left: 1700px;
  top: 94px;
  width: 190px;
  height: 28px;
  display: flex;
  align-items: center;
  gap: 9px;
  background: #fafafa;
  z-index: 1;
}
.ime svg { width: 19px; height: 19px; flex: none; }
.ime-dots { width: 2px; height: 20px; margin-left: 4px; margin-right: -2px; border-left: 2px dotted #bbb; }
.ime-m {
  width: 19px;
  height: 19px;
  line-height: 19px;
  text-align: center;
  border: 1px solid #777;
  font: 400 16px/19px "Liberation Sans", sans-serif;
  color: #333;
}
.ime-zh { font-size: 21px; line-height: 22px; font-weight: 700; color: #111; }
.ime-zh.small { font-size: 19px; }
.ime-punct { font-size: 19px; color: #111; line-height: 20px; }
.ime-menu { font-size: 17px; color: #111; margin-left: 5px; }

/* 对话框 */
.dialog {
  position: absolute;
  left: 510px;
  top: 101px;
  width: 901px;
  height: 792px;
  box-sizing: border-box;
  z-index: 3;
  display: flex;
  flex-direction: column;
  background: #f0f0f0;
  border: 1px solid #b65c98;
  font-size: 16px;
}
.dlg-title {
  height: 38px;
  flex: none;
  display: flex;
  align-items: center;
  justify-content: space-between;
  padding: 0 15px 3px 9px;
  box-sizing: border-box;
  background: #fff;
  font-size: 14.500px;
}
.dlg-title svg { width: 14px; height: 14px; }

.dlg-tabs {
  height: 38px;
  flex: none;
  display: flex;
  align-items: flex-end;
  padding-left: 15px;
  position: relative;
}
small { font-size: 12px; }
small.mid { font-size: 13.500px; }
.dlg-tab {
  height: 22px;
  line-height: 22px;
  padding: 0 3px 0 7px;
  font-size: 15.500px;
  box-sizing: border-box;
  background: #f0f0f0;
  border: 1px solid #d9d9d9;
  border-bottom: none;
  white-space: nowrap;
  width: 89px;
  overflow: hidden;
}
.dlg-tab.active { height: 25px; width: 96px; background: #fff; line-height: 24px; padding-left: 9px; }

.dlg-search {
  position: absolute;
  right: 10px;
  top: 2px;
  width: 261px;
  height: 28px;
  box-sizing: border-box;
  display: flex;
  align-items: center;
  padding-left: 2px;
  background: #f5f5f5;
  border: 1px solid #dcdcdc;
  color: #666;
  font-size: 15.500px;
}
.ds-gear { width: 17px; height: 17px; margin-right: 3px; }
.ds-glass { width: 24px; height: 24px; margin-left: auto; margin-right: 1px; }

.dlg-panel {
  height: 651px;
  flex: none;
  margin: 0 10px 0 13px;
  padding: 8px 0 0 5px;
  box-sizing: border-box;
  display: flex;
  background: #fff;
  border: 1px solid #d9d9d9;
  border-top: 1px solid #e3e3e3;
}

.opt-tree {
  list-style: none;
  margin: 0;
  padding: 0;
  width: 194px;
  height: 636px;
  flex: none;
  box-sizing: border-box;
  border: 1px solid #555;
  color: #222;
}
.opt {
  position: relative;
  height: 20px;
  line-height: 20px;
  padding-left: 4px;
  white-space: nowrap;
  font-size: 16px;
}
.opt.child { padding-left: 22px; }
.opt.child::before {
  content: "";
  position: absolute;
  left: 12px;
  top: -1px;
  bottom: 0;
  border-left: 1px dotted #999;
}
.opt.last::before { bottom: 10px; }
.opt-box {
  position: absolute;
  left: 8px;
  top: 5px;
  z-index: 1;
  width: 9px;
  height: 9px;
  background:
    linear-gradient(#555, #555) center/5px 1px no-repeat,
    linear-gradient(#555, #555) center/1px 5px no-repeat,
    #fff;
  border: 1px solid #999;
}
.opt-box.leaf {
  left: 12px;
  top: 10px;
  height: 0;
  width: 9px;
  background: none;
  border: none;
  border-top: 1px dotted #999;
}
.selected {
  display: inline-block;
  height: 19px;
  line-height: 18px;
  padding: 0 1px;
  margin-left: -2px;
  background: #1474c4;
  color: #fff;
  outline: 1px dotted #10203a;
  outline-offset: -1px;
}
.latin { font-size: 13.500px; }

.opts { margin-left: 11px; width: 490px; flex: none; padding-top: 8px; }

.group { border: 1px solid #d9d9d9; box-sizing: border-box; }
.g-shade { height: 238px; }
.g-wire { height: 154px; margin-top: 12px; }

.legend { height: 20px; margin-top: -10px; padding-left: 7px; line-height: 20px; }
.legend span { background: #fff; padding-right: 2px; display: inline-block; }

.speed {
  display: flex;
  justify-content: space-between;
  margin: 2px 0 0 16px;
  height: 20px;
  line-height: 20px;
  font-size: 15.500px;
  width: 409px;
}
.g-wire .speed { margin-top: 3px; }

.slider { position: relative; margin: -1px 0 0 16px; width: 433px; height: 30px; }
.g-wire .slider { margin-top: 7px; }
.track {
  position: absolute;
  left: 0;
  right: 0;
  top: 7px;
  height: 10px;
  box-sizing: border-box;
  display: flex;
  justify-content: flex-end;
  background: #fff;
  border: 1px solid #b5b5b5;
  border-top: 2px solid #8a8a8a;
  border-radius: 2px;
}
.red { background: #e01818; margin: -1px -1px 0 0; }
.thumb { position: absolute; left: 242px; top: 0; width: 13px; height: 23px; }
.thumb.t2 { left: 243px; }
.ticks { position: absolute; left: 6px; right: 6px; top: 24px; height: 4px; }
.ticks.coarse { background: repeating-linear-gradient(90deg, #b0b0b0 0 1px, transparent 1px 22.300px); }
.ticks.fine { background: repeating-linear-gradient(90deg, #bbb 0 1px, transparent 1px 8.200px); }
.mark { position: absolute; top: 24px; border-style: solid; border-width: 0 2px 3px 2px; border-color: transparent transparent #111 transparent; }
.mark.m1 { left: 392px; }
.mark.m2 { left: 426px; }

.shade-row { display: flex; justify-content: space-between; margin-top: 18px; }
.shade-left { padding-left: 12px; }
.dev-row { height: 25px; display: flex; align-items: center; margin-bottom: 6px; }
.dev-label { width: 81px; font-size: 15.500px; }
.dev-input {
  width: 122px;
  height: 25px;
  box-sizing: border-box;
  border: 1px solid #8f8f8f;
  line-height: 23px;
  font-size: 13px;
  padding-left: 3px;
}
.chk {
  display: flex;
  align-items: center;
  height: 30px;
  white-space: nowrap;
  color: #222;
  font-size: 16px;
}
.chk small { font-size: 11.500px; }
.chk small.mid { font-size: 14px; }
.chk.off { color: #777; }
.box {
  position: relative;
  width: 16px;
  height: 16px;
  flex: none;
  box-sizing: border-box;
  border: 1px solid #333;
  background: #fff;
  margin-right: 3px;
}
.box.on::after {
  content: "";
  position: absolute;
  left: 4px;
  top: 1px;
  width: 5px;
  height: 9px;
  border: solid #222;
  border-width: 0 1.300px 1.300px 0;
  transform: rotate(40deg);
}
.off .box { border-color: #bdbdbd; background: #f2f2f2; }
.off .box.on::after { border-color: #a8a8a8; }

.preview {
  width: 132px;
  height: 145px;
  margin: 7px 7px 0 0;
  box-sizing: border-box;
  border: 1px solid #222;
  flex: none;
}
.preview svg { width: 100%; height: 100%; display: block; }

.wire-checks { margin-top: 24px; padding-left: 14px; }
.wire-checks .chk { height: 28px; }

.outer-checks { margin: 8px 0 0 -1px; }
.outer-checks .chk { height: 27px; }

.btn {
  width: 86px;
  height: 30px;
  padding: 0;
  box-sizing: border-box;
  background: #e1e1e1;
  border: 1px solid #adadad;
  color: #222;
  font: inherit;
  font-size: 15.500px;
  line-height: 26px;
}
.btn.perf { display: block; width: 173px; height: 28px; margin: 2px 0 0 287px; }
.btn.ok { border: 2px solid #0f70b8; margin-right: 6px; }

.dlg-foot {
  flex: 1;
  display: flex;
  justify-content: flex-end;
  gap: 14px;
  padding: 17px 23px 0 0;
}

.grip { position: absolute; right: 0; bottom: 0; width: 14px; height: 14px; }

/* 标注层 */
.note {
  position: absolute;
  left: 1023px;
  top: 722px;
  z-index: 5;
  font-size: 33px;
  line-height: 46px;
  font-weight: 400;
  color: #e2332a;
  white-space: nowrap;
}
.marks { position: absolute; left: 0; top: 0; width: 1920px; height: 977px; z-index: 4; pointer-events: none; }
.wm { position: absolute; left: 1638px; top: 883px; width: 72px; height: 80px; z-index: 2; }
</style>

<style>
html, body { margin: 0; background: #fff; overflow: hidden; }
</style>
